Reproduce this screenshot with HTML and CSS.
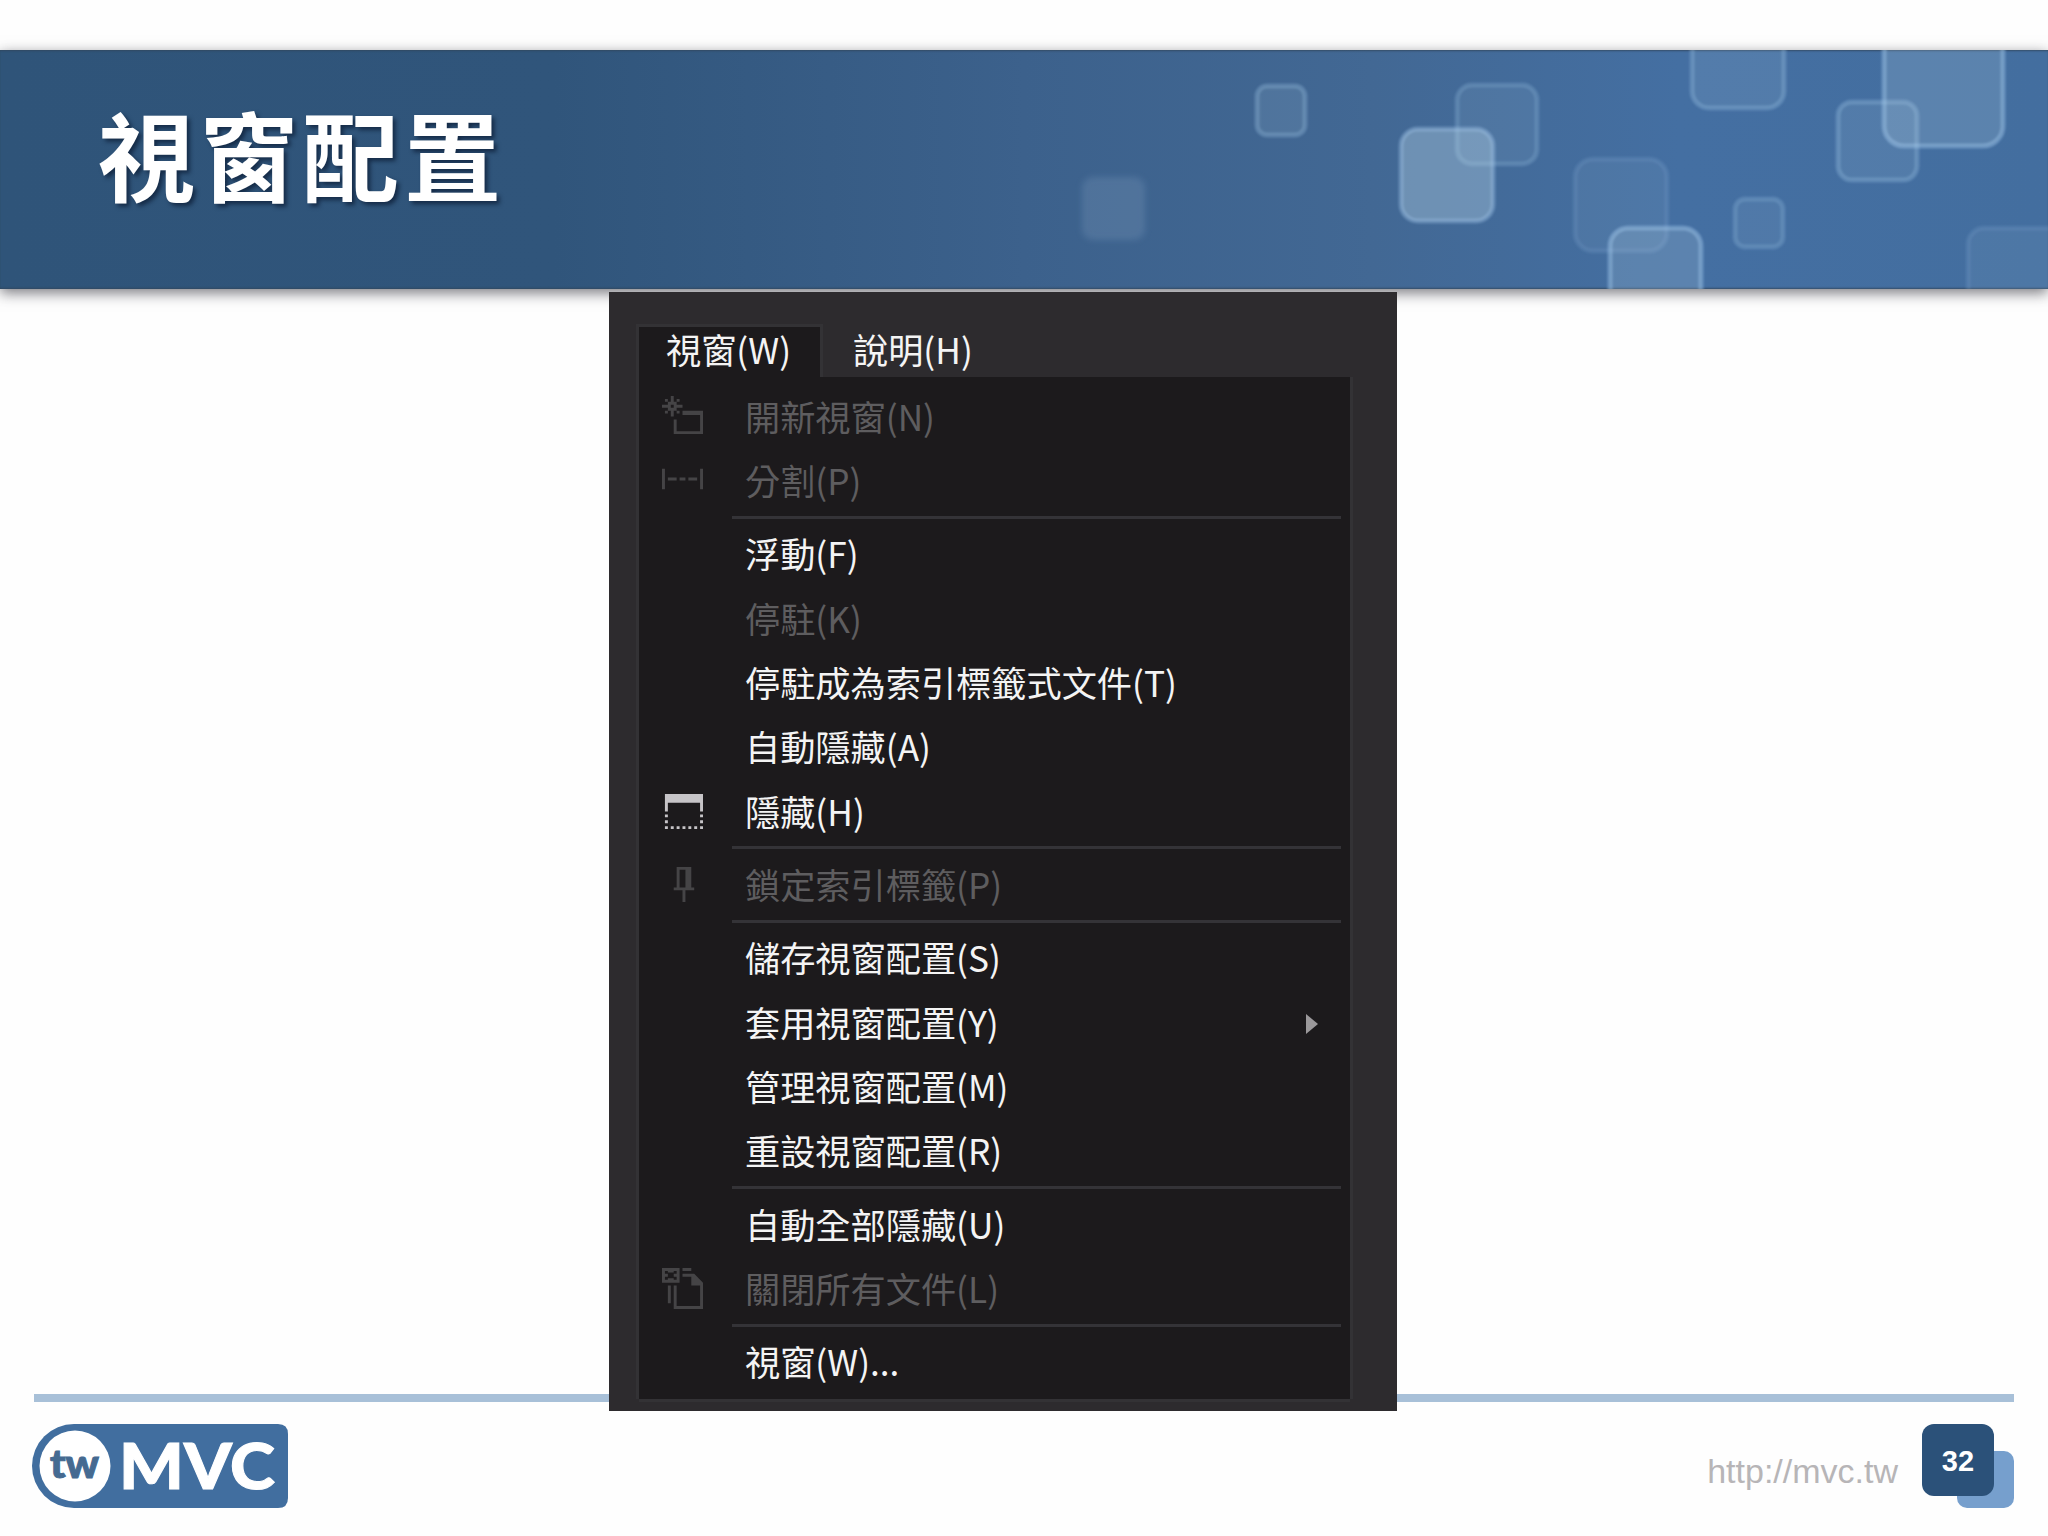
FILE: index.html
```html
<!DOCTYPE html>
<html lang="zh-Hant">
<head>
    <meta charset="UTF-8">
    <meta name="viewport" content="width=device-width, initial-scale=1.0">
    <title>視窗配置</title>

    <link rel="stylesheet" href="styles.css">
</head>
<body>

    <header class="banner">
        <!-- Decorative squares -->
        <svg class="squares" width="1000" height="239" viewBox="1048 50 1000 239">
            <rect class="soft" x="1083" y="178" width="61" height="61" rx="10"/>
            <rect class="s2" x="1257" y="86" width="48" height="49" rx="10"/>
            <rect class="s1" x="1457" y="85" width="80" height="79" rx="15"/>
            <rect class="s4" x="1401" y="129" width="92" height="92" rx="17"/>
            <rect class="s2" x="1692" y="10" width="92" height="98" rx="17"/>
            <rect class="s0" x="1575" y="159" width="92" height="92" rx="18"/>
            <rect class="s3" x="1610" y="228" width="91" height="92" rx="18"/>
            <rect class="s1" x="1735" y="199" width="48" height="48" rx="10"/>
            <rect class="s2" x="1838" y="102" width="79" height="78" rx="14"/>
            <rect class="s3" x="1884" y="20" width="119" height="126" rx="20"/>
            <rect class="s0" x="1968" y="228" width="110" height="92" rx="16"/>
        </svg>
        <h1>視窗配置</h1>
    </header>

    <main class="shot">
        <div class="menubar">
            <div class="tab active">視窗(W)</div>
            <div class="tab">說明(H)</div>
        </div>
        <ul class="menu">
            <li class="off">
                <svg class="icon" viewBox="0 0 14 14">
                    <path d="M3 0h1v2h-1zM3 5h1v2h-1zM0 3h2v1h-2zM5 3h2v1h-2zM1 1h1v1h-1zM5 1h1v1h-1zM1 5h1v1h-1zM5 5h1v1h-1zM2 2h3v3h-3zM3 3v1h1V3zM7 5h7v8H4V8h1v4h8V6.5H7z"/>
                </svg>
                <span>開新視窗(N)</span>
            </li>
            <li class="off">
                <svg class="icon" viewBox="0 0 14 14">
                    <path d="M0 3h1v7h-1zM13 3h1v7h-1zM2 6h3v1h-3zM6 6h2v1h-2zM9 6h3v1h-3z"/>
                </svg>
                <span>分割(P)</span>
            </li>
            <li class="line"></li>
            <li><span>浮動(F)</span></li>
            <li class="off"><span>停駐(K)</span></li>
            <li><span>停駐成為索引標籤式文件(T)</span></li>
            <li><span>自動隱藏(A)</span></li>
            <li>
                <svg class="icon light" viewBox="0 0 14 14">
                    <path d="M1 1h13v6h-1V4H2v3H1zM1 8h1v1h-1zM1 10h1v1h-1zM1 12h1v1h-1zM3 12h1v1h-1zM5 12h1v1h-1zM7 12h1v1h-1zM9 12h1v1h-1zM11 12h1v1h-1zM13 12h1v1h-1zM13 10h1v1h-1zM13 8h1v1h-1z"/>
                </svg>
                <span>隱藏(H)</span>
            </li>
            <li class="line"></li>
            <li class="off">
                <svg class="icon" viewBox="0 0 14 14">
                    <path d="M5 1h5v7h1v1H8v4H7V9H4V8h1zM6 2v6h2V2z"/>
                </svg>
                <span>鎖定索引標籤(P)</span>
            </li>
            <li class="line"></li>
            <li><span>儲存視窗配置(S)</span></li>
            <li>
                <span>套用視窗配置(Y)</span>
                <svg class="arrow" width="12" height="20" viewBox="0 0 12 20"><path d="M0 0l12 10L0 20z"/></svg>
            </li>
            <li><span>管理視窗配置(M)</span></li>
            <li><span>重設視窗配置(R)</span></li>
            <li class="line"></li>
            <li><span>自動全部隱藏(U)</span></li>
            <li class="off">
                <svg class="icon" viewBox="0 0 14 14">
                    <path d="M0 0h6v5H0zM1 1v1h1v1H1v1h1V3.5h2v.5h1V3H4V2h1V1H4v.5H2V1zM7 0h3v1h-3zM2 6h1v6h-1zM7 2h4l3 3v9H4V6h1v7h8V6h-3V3H7z"/>
                </svg>
                <span>關閉所有文件(L)</span>
            </li>
            <li class="line"></li>
            <li><span>視窗(W)...</span></li>
        </ul>
    </main>

    <footer>
        <svg class="logo" width="256" height="84" viewBox="0 0 256 84">
            <path d="M42 0H246Q256 0 256 10V74Q256 84 246 84H42A42 42 0 0 1 42 0z" fill="#416e9f"/>
            <circle cx="43" cy="42" r="35.5" fill="#fff"/>
            <text x="18" y="54" class="tw" textLength="49" lengthAdjust="spacingAndGlyphs">tw</text>
            <text x="87" y="65" class="mvc" textLength="156" lengthAdjust="spacingAndGlyphs">MVC</text>
        </svg>
        <div class="url">http://mvc.tw</div>
        <div class="page"><span>32</span></div>
    </footer>

</body>
</html>
```

FILE: styles.css
```css
* {
    box-sizing: border-box;
}

body {
    margin: 0;
    padding-top: 50px;
    width: 2048px;
    height: 1536px;
    overflow: hidden;
    background-color: #fefefe;
    font-family: "Noto Sans CJK TC", sans-serif;
    display: flex;
    flex-direction: column;
    align-items: center;
}

.banner {
    position: relative;
    width: 100%;
    height: 239px;
    flex: none;
    padding: 0 0 35px 98px;
    display: flex;
    align-items: center;
    background: linear-gradient(to right, #2f5479 0%, #30557b 27%, #3c618c 50%, #426894 67%, #446fa2 82%, #436e9f 100%);
    box-shadow: 0 4px 13px rgba(50, 50, 60, 0.65), inset 0 2px 2px -1px rgba(50, 70, 90, 0.8), inset 0 -2px 2px -1px rgba(50, 70, 90, 0.8);
}

/* The squares lie over the gradient on the right */
.squares {
    position: absolute;
    top: 0;
    right: 0;
}

.squares rect {
    fill: #bcd8e8;
    stroke: #a5cbee;
    stroke-width: 5;
    filter: blur(1px);
}

.squares .soft {
    fill-opacity: 0.14;
    stroke-opacity: 0.05;
    filter: blur(3px);
}

.squares .s0 {
    fill-opacity: 0.09;
    stroke-opacity: 0.13;
}

.squares .s1 {
    fill-opacity: 0.1;
    stroke-opacity: 0.22;
}

.squares .s2 {
    fill-opacity: 0.13;
    stroke-opacity: 0.28;
}

.squares .s3 {
    fill-opacity: 0.2;
    stroke-opacity: 0.42;
}

.squares .s4 {
    fill-opacity: 0.36;
    stroke-opacity: 0.36;
}

h1 {
    margin: 0;
    font-size: 97px;
    line-height: 120px;
    font-weight: 700;
    letter-spacing: 5px;
    color: #fff;
    text-shadow: 3px 3px 4px rgba(10, 25, 50, 0.7);
}

/* Menu */
.shot {
    position: relative;
    z-index: 1;
    width: 788px;
    height: 1119px;
    flex: none;
    margin: 3px 0 0 -42px;
    padding: 35px 47px 0 30px;
    background-color: #2d2b2e;
    font-size: 35.2px;
    color: #f4f4f4;
}

.menubar {
    display: flex;
    height: 50px;
}

.tab {
    height: 50px;
    padding: 0 28px 0 33px;
    line-height: 43px;
    white-space: nowrap;
}

.tab.active {
    width: 181px;
    padding-left: 27px;
    background-color: #1c1a1c;
    box-shadow: 0 0 0 3px #333235;
    clip-path: inset(-3px -3px 0 -3px);
}

.menu {
    position: relative;
    margin: 0;
    padding: 10px 0 0;
    height: 1022px;
    list-style: none;
    background-color: #1c1a1c;
    box-shadow: 3px 0 0 #333235, -3px 0 0 #333235, 0 3px 0 #333235;
}

.menu li {
    display: flex;
    align-items: center;
    height: 64.35px;
    padding: 0 32px 0 23px;
    line-height: 58px;
    white-space: nowrap;
}

.menu li span {
    margin-left: auto;
    width: 573px;
    padding-bottom: 7px;
}

.menu .off {
    color: #5e5d5f;
}

.menu .line {
    height: 9px;
    padding: 0 9px 6px 93px;
}

.menu .line::before {
    content: "";
    width: 100%;
    height: 3px;
    background-color: #343337;
}

.icon {
    width: 41px;
    height: 41px;
    flex: none;
    margin-bottom: 6px;
    fill: #454446;
    fill-rule: evenodd;
}

.icon.light {
    fill: #c6c4c7;
}

.arrow {
    flex: none;
    margin: 0 0 3px -12px;
    fill: #9b999b;
}

/* Footer */
footer {
    width: 1980px;
    height: 115px;
    flex: none;
    margin-top: -17px;
    padding-top: 22px;
    border-top: 8px solid #a8c0d8;
    display: flex;
    align-items: flex-start;
}

.logo {
    margin-left: -2px;
}

.tw {
    font: 900 39px Lato, sans-serif;
    fill: #456a91;
    stroke: #456a91;
    stroke-width: 1;
}

.mvc {
    font: 900 62px Lato, sans-serif;
    fill: #fff;
    stroke: #fff;
    stroke-width: 1;
}

.url {
    margin-left: auto;
    padding: 27px 24px 0 0;
    font: 34px/40px "Liberation Sans", sans-serif;
    color: #b7b5b7;
}

.page {
    position: relative;
    width: 92px;
    height: 84px;
}

.page::before {
    content: "";
    position: absolute;
    right: 0;
    bottom: 0;
    width: 57px;
    height: 57px;
    border-radius: 10px;
    background-color: #769fcd;
}

.page span {
    position: relative;
    display: block;
    width: 72px;
    height: 72px;
    border-radius: 12px;
    background-color: #2b5179;
    color: #fff;
    font: bold 29px/74px "Liberation Sans", sans-serif;
    text-align: center;
}
```
